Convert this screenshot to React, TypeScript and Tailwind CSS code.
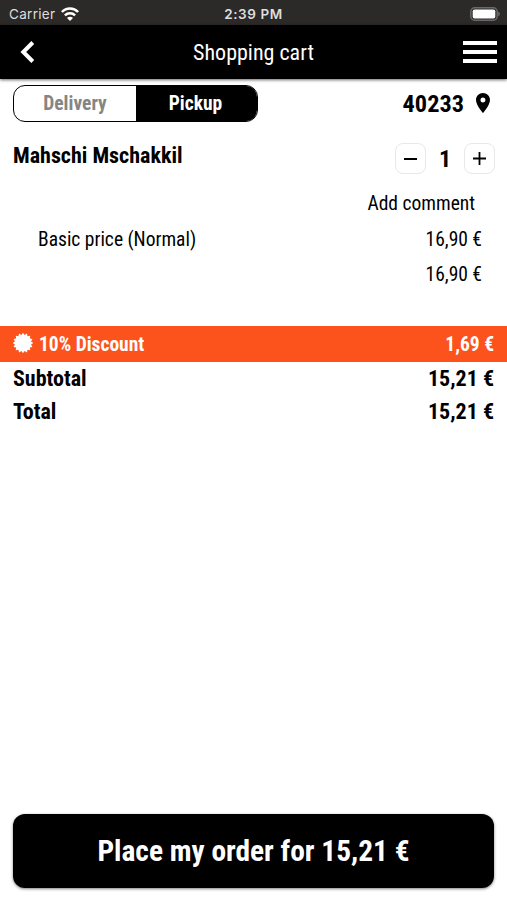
import React from 'react';

const badgePoints = Array.from({ length: 32 }, (_, i) => {
  const r = i % 2 === 0 ? 10.2 : 8.2;
  const a = (i * Math.PI) / 16;
  return `${10 + r * Math.sin(a)},${10 - r * Math.cos(a)}`;
}).join(' ');

const StatusBar = () => (
  <div className="grid h-[25px] grid-cols-3 items-center bg-[#2c2929] pt-[3px] font-['Inter',sans-serif] text-[13.5px] tracking-[0.3px] text-[#dedede]">
    <div className="flex items-center gap-[6px] pl-[9px]">
      <span>Carrier</span>
      <svg width="18" height="14" viewBox="0 0 18 14" fill="none" stroke="#fff" strokeWidth="2.5">
        <path d="M.9 5C5.300.400 12.700.400 17.100 5" />
        <path d="M3.900 8.300c2.900-2.800 7.300-2.800 10.200 0" />
        <path d="M9 14 6 10.900c1.700-1.600 4.300-1.600 6 0z" fill="#fff" stroke="none" />
      </svg>
    </div>
    <span className="text-center font-semibold tracking-[0.6px] whitespace-nowrap">2:39 PM</span>
    <svg className="mr-[6px] justify-self-end" width="31" height="14" viewBox="0 0 31 14">
      <rect x="0.8" y="0.8" width="26.4" height="12.4" rx="4" fill="none" stroke="#6b6969" strokeWidth="1.5" />
      <rect x="2.7" y="2.5" width="22.600" height="9" rx="1.8" fill="#fff" />
      <path d="M28.3 4.8c2 .7 2 3.7 0 4.4z" fill="#777" />
    </svg>
  </div>
);

const Header = () => (
  <header className="relative grid h-[54px] grid-cols-3 items-center bg-black text-white shadow-[0_1px_3px_rgba(0,0,0,0.6)]">
    <svg className="ml-[20px]" width="15" height="22" viewBox="0 0 15 22" fill="none" stroke="#fff" strokeWidth="4">
      <path d="M12.800 1.500 3.300 11l9.500 9.500" />
    </svg>
    <h1 className="text-center text-[22px] whitespace-nowrap">Shopping cart</h1>
    <div className="mr-[10px] flex w-[34px] flex-col gap-[5px] justify-self-end">
      <span className="h-1 bg-white" />
      <span className="h-1 bg-white" />
      <span className="h-1 bg-white" />
    </div>
  </header>
);

const Row = ({ label, price }: { label: string; price: string }) => (
  <div className="flex h-[33px] items-center justify-between px-[13px] text-[22px] font-bold">
    <span>{label}</span>
    <span>{price}</span>
  </div>
);

const App = () => {
  return (
    <div className="flex h-[900px] w-[507px] flex-col overflow-hidden bg-white font-['Roboto_Condensed',Roboto,sans-serif] text-black [font-stretch:75%]">
      <StatusBar />
      <Header />

      {/* Order type and postcode */}
      <div className="mt-[6px] flex h-[37px] items-center justify-between pr-[17px] pl-[13px]">
        <div className="flex h-full w-[245px] overflow-hidden rounded-[12px] border border-black text-[19.5px] font-bold">
          <div className="flex w-[122px] items-center justify-center text-[#858585]">Delivery</div>
          <div className="flex flex-1 items-center justify-center bg-black pr-[2px] text-white">Pickup</div>
        </div>
        <div className="flex items-center gap-[12px]">
          <span className="pt-[2px] text-[24.3px] font-bold">40233</span>
          <svg className="mb-[2px]" width="14" height="20" viewBox="0 0 14 20">
            <path d="M7 0C3.1 0 0 3.1 0 7c0 5.2 7 13 7 13s7-7.800 7-13c0-3.900-3.100-7-7-7zm0 9.500a2.500 2.500 0 1 1 0-5 2.500 2.500 0 0 1 0 5z" />
          </svg>
        </div>
      </div>

      {/* Cart item */}
      <div className="mt-[21px] flex h-[31px] items-center justify-between pr-[12px] pl-[13px]">
        <span className="pb-[6px] text-[22px] font-bold">Mahschi Mschakkil</span>
        <div className="flex items-center">
          <button className="flex size-[31px] items-center justify-center rounded-[8px] border border-[#e8e8e8]">
            <span className="h-[2px] w-[13px] bg-black" />
          </button>
          <span className="w-[38px] text-center text-[24px] font-bold">1</span>
          <button className="flex size-[31px] items-center justify-center rounded-[8px] border border-[#e8e8e8]">
            <svg width="13" height="13" viewBox="0 0 13 13" stroke="#000" strokeWidth="1.8">
              <path d="M6.500 0v13M0 6.500h13" />
            </svg>
          </button>
        </div>
      </div>
      <div className="mt-[12px] flex h-[35px] items-center justify-end pr-[32px] text-[19.5px]">Add comment</div>
      <div className="flex h-[36px] items-center justify-between pt-[1px] pr-[25px] pl-[38px] text-[19.5px]">
        <span>Basic price (Normal)</span>
        <span>16,90 €</span>
      </div>
      <div className="flex h-[35px] items-center justify-end pr-[25px] text-[19.5px]">16,90 €</div>

      {/* Totals */}
      <div className="mt-[34px] flex h-[36px] items-center justify-between bg-[#fc531c] px-[13px] text-[19.5px] font-bold text-white">
        <div className="flex items-center gap-[6px]">
          <svg className="mb-[2px]" width="20" height="20" viewBox="0 0 20 20" fill="#fff">
            <polygon points={badgePoints} />
          </svg>
          <span className="pt-[1px]">10% Discount</span>
        </div>
        <span className="pt-[1px]">1,69 €</span>
      </div>
      <Row label="Subtotal" price="15,21 €" />
      <Row label="Total" price="15,21 €" />

      <button className="mx-[13px] mt-auto mb-[12px] h-[74px] shrink-0 rounded-[12px] bg-black text-[29.4px] font-bold text-white shadow-[0_1px_3px_rgba(0,0,0,0.5)]">
        Place my order for 15,21 €
      </button>
    </div>
  );
};

export default App;
